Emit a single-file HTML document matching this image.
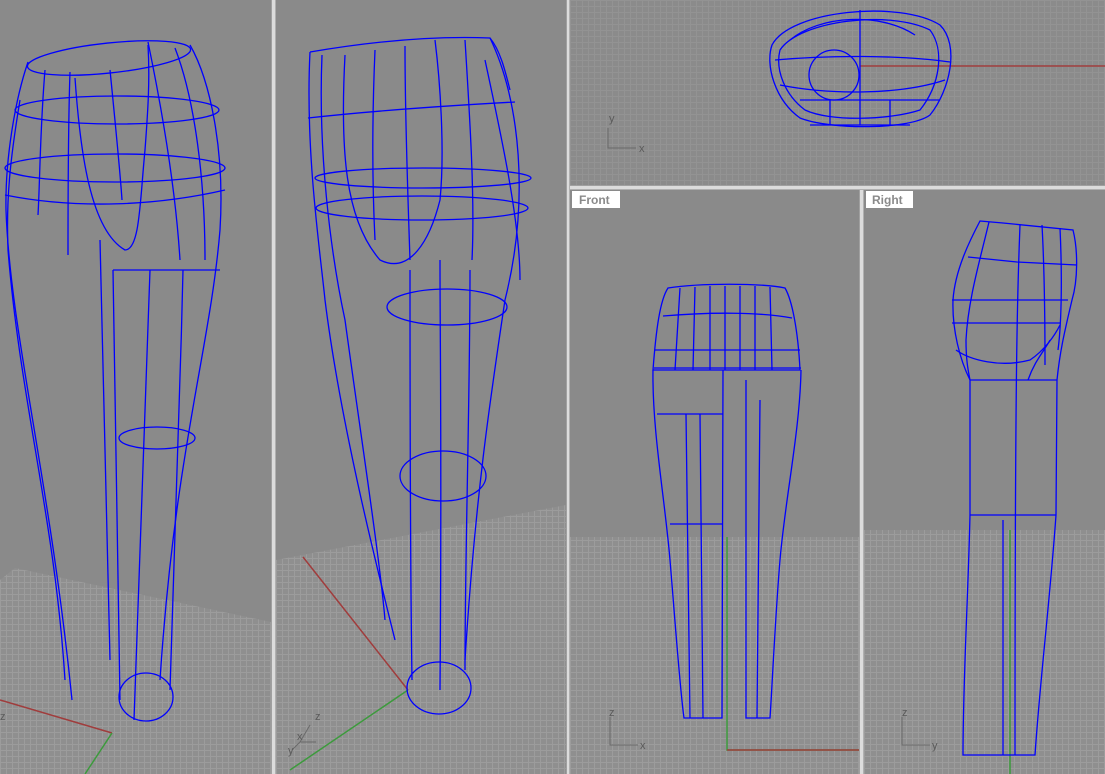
<!DOCTYPE html>
<html><head><meta charset="utf-8"><style>
html,body{margin:0;padding:0;width:1105px;height:774px;overflow:hidden;background:#dcdcdc}
svg{display:block}
.lbl{font:bold 12px "Liberation Sans",sans-serif;fill:#8a8a8a}
</style></head><body>
<svg width="1105" height="774" viewBox="0 0 1105 774" xmlns="http://www.w3.org/2000/svg">
<defs>
<pattern id="g" width="6" height="6" patternUnits="userSpaceOnUse">
<rect width="6" height="6" fill="#8f8f8f"/>
<path d="M0 0.5H6M0.5 0V6" stroke="#9c9c9c" stroke-width="1"/>
</pattern>
<pattern id="g2" width="6" height="6" patternUnits="userSpaceOnUse">
<rect width="6" height="6" fill="#8b8b8b"/>
<path d="M0 0.5H6M0.5 0V6" stroke="#939393" stroke-width="1"/>
</pattern>
<clipPath id="c1"><rect x="0" y="0" width="271" height="774"/></clipPath>
<clipPath id="c2"><rect x="276" y="0" width="290" height="774"/></clipPath>
</defs>
<!-- panels -->
<rect x="0" y="0" width="271" height="774" fill="#8a8a8a"/>
<rect x="276" y="0" width="290" height="774" fill="#8a8a8a"/>
<rect x="570" y="0" width="535" height="185" fill="url(#g2)"/>
<rect x="570" y="190" width="289" height="584" fill="#8a8a8a"/>
<rect x="864" y="190" width="241" height="584" fill="#8a8a8a"/>
<!-- separator shading -->
<rect x="271" y="0" width="1" height="774" fill="#a0a0a0"/>
<rect x="275" y="0" width="1" height="774" fill="#b0b0b0"/>
<rect x="566" y="0" width="1" height="774" fill="#a0a0a0"/>
<rect x="569" y="0" width="1" height="774" fill="#b0b0b0"/>
<rect x="570" y="185" width="535" height="1" fill="#a0a0a0"/>
<rect x="570" y="189" width="535" height="1" fill="#b0b0b0"/>
<rect x="859" y="190" width="1" height="584" fill="#a0a0a0"/>
<rect x="863" y="190" width="1" height="584" fill="#b0b0b0"/>
<!-- grids -->
<polygon points="0,580 15,568 271,622 271,774 0,774" fill="url(#g)"/>
<polygon points="276,560 566,505 566,774 276,774" fill="url(#g)"/>
<rect x="570" y="537" width="289" height="237" fill="url(#g)"/>
<rect x="864" y="530" width="241" height="244" fill="url(#g)"/>

<g fill="none" stroke-width="1.3">
<!-- panel 1 -->
<g clip-path="url(#c1)">
<path d="M0,700 L112,733" stroke="#a03c3c" stroke-width="1.5"/>
<path d="M112,733 L85,774" stroke="#3c9a3c" stroke-width="1.5"/>
<g stroke="#0000ff">
<ellipse cx="109" cy="58" rx="82" ry="15" transform="rotate(-6 109 58)"/>
<ellipse cx="117" cy="110" rx="102" ry="14"/>
<ellipse cx="115" cy="168" rx="110" ry="14"/>
<path d="M5,195 C80,210 160,205 225,190"/>
<path d="M28,62 C15,100 5,160 6,210 C10,330 50,480 72,700"/>
<path d="M20,100 C10,160 6,200 8,250 C20,400 55,520 65,680"/>
<path d="M190,45 C210,80 225,150 220,230 C210,350 175,450 160,680"/>
<path d="M175,48 C195,100 205,180 205,260"/>
<path d="M148,42 C160,100 175,180 180,260"/>
<path d="M45,70 C40,130 40,180 38,215"/>
<path d="M70,72 C68,130 68,200 68,255"/>
<path d="M75,78 C80,150 90,230 125,250 C140,250 140,200 145,150 C148,110 150,80 148,45"/>
<path d="M110,70 C115,120 120,170 122,200"/>
<path d="M113,270 L220,270"/>
<path d="M113,270 L120,700"/>
<path d="M150,270 L134,720"/>
<path d="M100,240 C105,400 108,560 110,660"/>
<path d="M183,270 C180,400 175,520 170,690"/>
<ellipse cx="157" cy="438" rx="38" ry="11"/>
<ellipse cx="146" cy="697" rx="27" ry="24"/>
</g>
</g>
<!-- panel 2 -->
<g clip-path="url(#c2)">
<path d="M303,557 L408,690" stroke="#a03c3c" stroke-width="1.5"/>
<path d="M408,690 L290,770" stroke="#3c9a3c" stroke-width="1.5"/>
<g stroke="#0000ff">
<path d="M310,52 C380,40 440,36 490,38 C500,50 505,70 510,90"/>
<path d="M310,52 C305,150 320,250 325,300 C340,420 375,560 395,640"/>
<path d="M322,55 C318,150 330,250 345,320 C360,430 380,560 385,620"/>
<path d="M490,38 C520,100 530,200 505,300 C490,400 475,500 465,660"/>
<path d="M308,118 C380,110 460,105 515,102"/>
<ellipse cx="423" cy="178" rx="108" ry="10"/>
<ellipse cx="422" cy="208" rx="106" ry="12"/>
<path d="M345,55 C340,150 345,220 380,260 C410,275 430,240 440,200 C445,150 440,80 435,40"/>
<path d="M375,50 C372,120 372,180 375,240"/>
<path d="M405,46 C405,120 408,200 410,260"/>
<path d="M465,40 C470,120 475,200 472,260"/>
<path d="M485,60 C500,130 520,220 520,280"/>
<ellipse cx="447" cy="307" rx="60" ry="18"/>
<path d="M440,260 C440,350 442,450 440,690"/>
<path d="M410,270 C410,400 410,550 412,680"/>
<path d="M470,270 C470,400 465,550 465,670"/>
<ellipse cx="443" cy="476" rx="43" ry="25"/>
<ellipse cx="439" cy="688" rx="32" ry="26"/>
</g>
</g>
<!-- top panel -->
<path d="M860,66 L1105,66" stroke="#a03c3c" stroke-width="1.5"/>
<g stroke="#0000ff">
<path d="M772,45 C790,10 900,0 940,25 C960,45 950,90 930,115 C910,130 830,130 800,118 C775,100 765,65 772,45Z"/>
<path d="M780,50 C800,20 890,10 930,30 C945,50 940,85 920,110 C890,120 830,122 805,110 C785,95 775,70 780,50Z"/>
<path d="M790,40 C820,15 880,12 915,35"/>
<path d="M775,60 C830,55 900,55 950,62"/>
<path d="M780,85 C830,95 900,95 945,80"/>
<circle cx="834" cy="75" r="25"/>
<path d="M800,100 L940,100 M810,125 L910,125 M860,10 L860,125 M830,100 L830,125 M890,100 L890,125"/>
</g>
<!-- front panel -->
<path d="M727,537 L727,750 L859,750" stroke="#3c9a3c" stroke-width="1.5"/>
<path d="M727,750 L859,750" stroke="#a03c3c" stroke-width="1.5"/>
<g stroke="#0000ff">
<path d="M668,288 C700,283 760,283 785,288 C792,300 798,330 800,370 L653,370 C656,330 660,300 668,288Z"/>
<path d="M663,316 C710,312 760,312 792,318"/>
<path d="M655,350 L800,350 M654,368 L801,368"/>
<path d="M680,288 L675,370 M695,287 L693,370 M710,286 L710,370 M725,286 L725,370 M740,286 L740,370 M755,286 L755,370 M770,287 L772,370"/>
<path d="M653,370 C652,430 665,500 670,560 C675,620 680,690 684,718 L722,718 L723,370"/>
<path d="M801,370 C800,430 785,500 780,560 C775,620 772,690 770,718 L746,718 L746,380"/>
<path d="M657,414 L723,414 M670,524 L723,524"/>
<path d="M686,414 L690,718 M700,414 L703,718 M760,400 L757,718"/>
</g>
<!-- right panel -->
<path d="M1010,530 L1010,774" stroke="#3c9a3c" stroke-width="1.5"/>
<g stroke="#0000ff">
<path d="M980,221 L1003,223 L1073,230 C1078,250 1078,280 1072,300 C1065,330 1060,350 1057,380 L1056,515 C1050,600 1040,680 1035,755 L963,755 C963,680 968,600 970,515 L970,380 C960,360 952,330 953,300 C955,270 970,240 980,221Z"/>
<path d="M989,222 C980,260 968,300 966,340 C966,360 968,370 970,380"/>
<path d="M968,257 L1017,262 L1077,265"/>
<path d="M952,300 L1068,300 M952,323 L1060,323 M970,380 L1057,380 M970,515 L1056,515"/>
<path d="M1020,225 C1018,280 1015,330 1015,755"/>
<path d="M1042,225 C1045,280 1045,350 1045,365"/>
<path d="M1060,228 C1062,270 1062,320 1058,350"/>
<path d="M956,350 C970,360 1000,368 1030,360 C1045,350 1055,335 1060,325"/>
<path d="M1028,380 C1035,360 1045,350 1050,340"/>
<path d="M1003,755 L1003,520"/>
</g>
</g>
<!-- axis icons -->
<g stroke="#6a6a6a" stroke-width="1" fill="none">
<path d="M608,128 L608,148 L636,148"/>
<path d="M610,717 L610,745 L638,745"/>
<path d="M902,717 L902,745 L930,745"/>
<path d="M310,725 L300,742 L316,742 M300,742 L292,750"/>
</g>
<g font-family="Liberation Sans,sans-serif" font-size="11" fill="#5a5a5a">
<text x="609" y="122">y</text><text x="639" y="152">x</text>
<text x="609" y="716">z</text><text x="640" y="749">x</text>
<text x="902" y="716">z</text><text x="932" y="749">y</text>
<text x="315" y="720">z</text><text x="297" y="740">x</text><text x="288" y="754">y</text>
<text x="0" y="720">z</text>
</g>
<!-- labels -->
<rect x="572" y="191" width="48" height="17" fill="#fff"/>
<text x="579" y="204" class="lbl">Front</text>
<rect x="866" y="191" width="47" height="17" fill="#fff"/>
<text x="872" y="204" class="lbl">Right</text>
</svg>
</body></html>
